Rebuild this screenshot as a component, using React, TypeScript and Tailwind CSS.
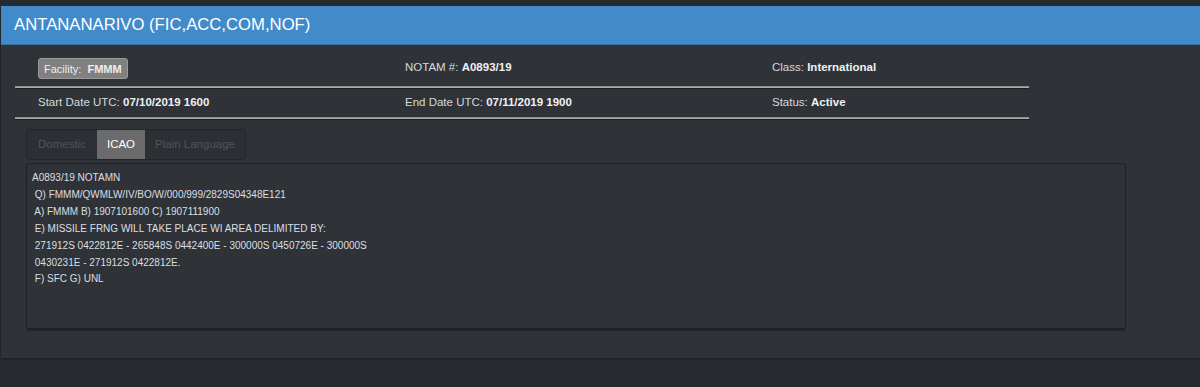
import React from "react";

const lines = [
  "A0893/19 NOTAMN",
  " Q) FMMM/QWMLW/IV/BO/W/000/999/2829S04348E121",
  " A) FMMM B) 1907101600 C) 1907111900",
  " E) MISSILE FRNG WILL TAKE PLACE WI AREA DELIMITED BY:",
  " 271912S 0422812E - 265848S 0442400E - 300000S 0450726E - 300000S",
  " 0430231E - 271912S 0422812E.",
  " F) SFC G) UNL",
];

function Cell({ label, value }: { label: string; value: string }) {
  return (
    <div className="w-[367px] pl-[23px] text-[11.5px] text-[#d6d9dc]">
      {label} <span className="font-bold text-[#eef0f2]">{value}</span>
    </div>
  );
}

export default function App() {
  return (
    <div
      className="min-h-[387px] bg-[#272a2e] pt-[6px]"
      style={{ fontFamily: '"Liberation Sans", Arial, sans-serif' }}
    >
      <div className="ml-[1px] h-[352px] bg-[#2f3338] shadow-[0_1px_2px_rgba(0,0,0,0.3)]">
        <div className="flex h-[39px] items-center border-b border-[#3a6f9e] bg-[#428bca] pl-[13px] text-[16.7px] text-white">
          ANTANANARIVO (FIC,ACC,COM,NOF)
        </div>
        <div className="pl-[14px]">
          <div className="flex h-[41px] items-center pt-[4px]">
            <div className="w-[367px] pl-[23px]">
              <span className="inline-flex h-[21px] items-center whitespace-pre rounded-[3px] border border-[#9a9a9a] bg-[#808080] px-[5px] text-[11px] text-[#eeeeee]">
                {"Facility:  "}
                <span className="font-bold">FMMM</span>
              </span>
            </div>
            <Cell label="NOTAM #:" value="A0893/19" />
            <Cell label="Class:" value="International" />
          </div>
          <div className="h-[2px] w-[1014px] border-t border-[#8e8e8e] bg-[#aaaaaa] shadow-[0_1px_0_#1c1f22]" />
          <div className="flex h-[29px] items-center">
            <Cell label="Start Date UTC:" value="07/10/2019 1600" />
            <Cell label="End Date UTC:" value="07/11/2019 1900" />
            <Cell label="Status:" value="Active" />
          </div>
          <div className="h-[2px] w-[1014px] border-t border-[#8e8e8e] bg-[#aaaaaa] shadow-[0_1px_0_#1c1f22]" />
        </div>
        <div className="pl-[25px] pt-[10px]">
          <div className="flex h-[31px] w-fit overflow-hidden whitespace-nowrap rounded-[4px] border border-[#23272b] bg-[#2c3035] text-[11.5px]">
            <div className="flex items-center px-[11px] text-[#4f5459]">Domestic</div>
            <div className="flex items-center bg-[#6b6b6b] px-[10px] text-white">ICAO</div>
            <div className="flex items-center px-[10px] text-[#4f5459]">Plain Language</div>
          </div>
          <div className="mt-[3px] h-[166px] w-[1100px] rounded-[3px] border border-[#1e2125] bg-[#2f3338] px-[5px] pt-[6px] text-[10px] leading-[16.9px] text-[#dcdfe2] shadow-[0_2px_0_#222528]">
            {lines.map((l, i) => (
              <div key={i} className="whitespace-pre">
                {l}
              </div>
            ))}
          </div>
        </div>
      </div>
    </div>
  );
}
